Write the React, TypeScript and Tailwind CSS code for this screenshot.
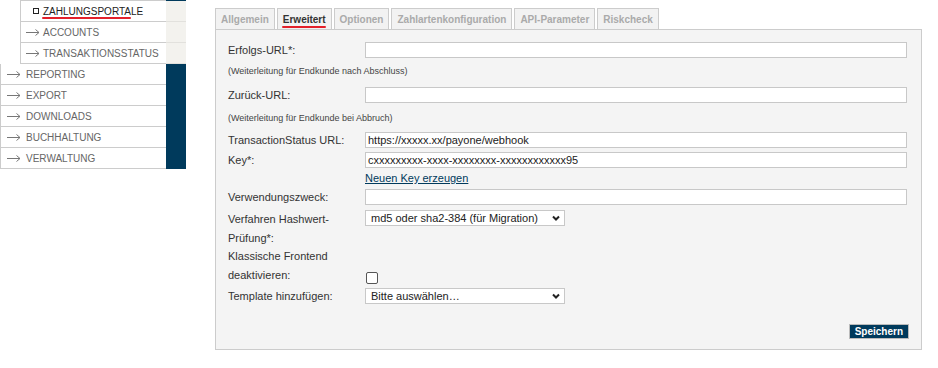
import React from "react";

const subItems = [
  { label: "ZAHLUNGSPORTALE", active: true },
  { label: "ACCOUNTS", active: false },
  { label: "TRANSAKTIONSSTATUS", active: false },
];

const mainItems = ["REPORTING", "EXPORT", "DOWNLOADS", "BUCHHALTUNG", "VERWALTUNG"];

const tabs = ["Allgemein", "Erweitert", "Optionen", "Zahlartenkonfiguration", "API-Parameter", "Riskcheck"];

function Arrow() {
  return (
    <svg width="14" height="7" viewBox="0 0 14 7" className="shrink-0" fill="none" stroke="#777" strokeWidth="1">
      <path d="M0 3.5H13" />
      <path d="M9.5 0.5L13 3.5L9.5 6.5" />
    </svg>
  );
}

function Chevron() {
  return (
    <svg width="8" height="6" viewBox="0 0 8 6" fill="none" stroke="#222" strokeWidth="2" className="shrink-0">
      <path d="M1 1.5L4 4.5L7 1.5" />
    </svg>
  );
}

function Sidebar() {
  return (
    <div className="w-[186px] shrink-0 text-[10px] text-[#666]">
      <div className="flex h-[1px]">
        <div className="w-[20px]" />
        <div className="w-[146px] bg-[#ccc]" />
        <div className="w-[20px] bg-[#003a5c]" />
      </div>
      {subItems.map((item) => (
        <div key={item.label} className="flex h-[21px]">
          <div className="w-[20px]" />
          <div className="w-[146px] border-l border-b border-[#ccc] flex items-center">
            {item.active ? (
              <div className="relative flex items-center pl-[12px] gap-[4px]">
                <span className="w-[6px] h-[6px] border border-[#222] bg-white" />
                <span className="text-[#222]">{item.label}</span>
                <span className="absolute left-[21px] top-[13px] w-[89px] h-[2px] rounded-full bg-[#e3202a]" />
              </div>
            ) : (
              <div className="flex items-center pl-[5px] gap-[3px]">
                <Arrow />
                <span>{item.label}</span>
              </div>
            )}
          </div>
          <div className="w-[20px] bg-[#f3f2ee] border-b border-[#e2e1dd]" />
        </div>
      ))}
      {mainItems.map((label) => (
        <div key={label} className="flex h-[21px]">
          <div className="w-[166px] border-l border-b border-[#ccc] flex items-center pl-[6px] gap-[5px]">
            <Arrow />
            <span>{label}</span>
          </div>
          <div className="w-[20px] bg-[#003a5c]" />
        </div>
      ))}
    </div>
  );
}

function TextRow({ label, value, className = "" }: { label: string; value?: string; className?: string }) {
  return (
    <div className={`flex items-center h-[16px] ${className}`}>
      <div className="w-[137px] shrink-0">{label}</div>
      <div className="flex-1 h-[16px] border border-[#c8c8c8] bg-white px-[2px] leading-[14px] text-[#222]">
        {value}
      </div>
    </div>
  );
}

function SelectBox({ value }: { value: string }) {
  return (
    <div className="w-[200px] h-[16px] border border-[#c8c8c8] bg-white flex items-center justify-between pl-[5px] pr-[4px] text-[#222]">
      <span className="leading-[14px]">{value}</span>
      <Chevron />
    </div>
  );
}

function Panel() {
  return (
    <div className="ml-[29px] mt-[8px] w-[707px]">
      <div className="flex gap-[2px]">
        {tabs.map((tab) => (
          <div
            key={tab}
            className={`relative h-[21px] border border-b-0 border-[#ccc] bg-[#f2f2f2] px-[5px] flex items-center text-[10px] font-bold ${
              tab === "Erweitert" ? "text-[#333]" : "text-[#aaa]"
            }`}
          >
            {tab}
            {tab === "Erweitert" && (
              <span className="absolute left-[4px] right-[5px] bottom-[1px] h-[2px] rounded-full bg-[#e3202a]" />
            )}
          </div>
        ))}
      </div>
      <div className="border border-[#ccc] bg-[#f4f4f4] pt-[12px] pb-[10px] pl-[12px] pr-[14px] text-[11px] text-[#333]">
        <TextRow label="Erfolgs-URL*:" />
        <div className="mt-[7px] h-[12px] leading-[12px] text-[9px] text-[#444]">(Weiterleitung für Endkunde nach Abschluss)</div>
        <TextRow label="Zurück-URL:" className="mt-[10px]" />
        <div className="mt-[9px] h-[12px] leading-[12px] text-[9px] text-[#444]">(Weiterleitung für Endkunde bei Abbruch)</div>
        <TextRow label="TransactionStatus URL:" value="https://xxxxx.xx/payone/webhook" className="mt-[8px]" />
        <TextRow label="Key*:" value="cxxxxxxxxx-xxxx-xxxxxxxx-xxxxxxxxxxxx95" className="mt-[4px]" />
        <div className="mt-[3px] h-[14px] leading-[14px] pl-[137px]">
          <a href="#" className="text-[#003a5c] underline">Neuen Key erzeugen</a>
        </div>
        <TextRow label="Verwendungszweck:" className="mt-[4px]" />
        <div className="mt-[5px] flex h-[37px]">
          <div className="w-[137px] shrink-0 leading-[19px]">
            Verfahren Hashwert-
            <br />
            Prüfung*:
          </div>
          <SelectBox value="md5 oder sha2-384 (für Migration)" />
        </div>
        <div className="flex h-[38px]">
          <div className="w-[137px] shrink-0 leading-[19px]">
            Klassische Frontend
            <br />
            deaktivieren:
          </div>
          <div className="self-end mb-[1px] ml-[1px] w-[12px] h-[12px] rounded-[2px] border border-[#555] bg-white" />
        </div>
        <div className="mt-[3px] flex items-center h-[16px]">
          <div className="w-[137px] shrink-0">Template hinzufügen:</div>
          <SelectBox value="Bitte auswählen…" />
        </div>
        <div className="mt-[20px] flex justify-end pr-[-2px]">
          <button className="h-[15px] px-[5px] border border-[#bbb] bg-[#003a5c] text-white text-[10px] font-bold leading-[13px] mr-[-2px]">
            Speichern
          </button>
        </div>
      </div>
    </div>
  );
}

export default function App() {
  return (
    <div className="w-[938px] h-[368px] bg-white flex font-['Liberation_Sans',Arial,sans-serif] overflow-hidden">
      <Sidebar />
      <Panel />
    </div>
  );
}
